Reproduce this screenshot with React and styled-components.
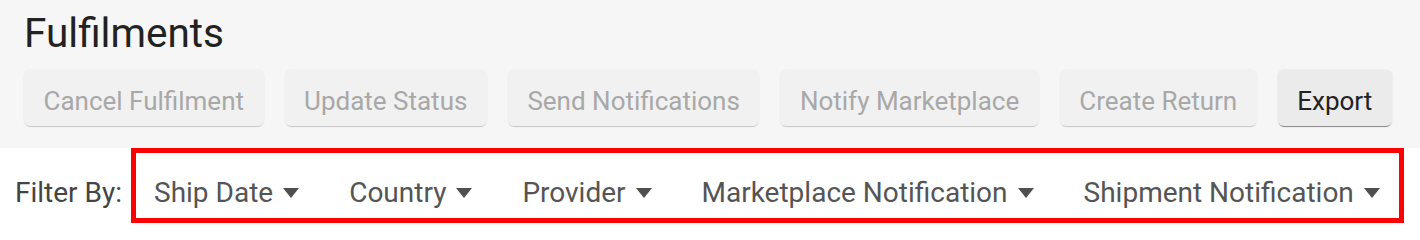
import React from "react";
import styled, { createGlobalStyle } from "styled-components";

const Global = createGlobalStyle`
  html, body { margin: 0; padding: 0; background: #ffffff; }
  body { font-family: Roboto, "Liberation Sans", sans-serif; }
  * { box-sizing: border-box; }
`;

const Header = styled.header`
  background: #f6f6f6;
  padding: 13px 24px 22px;
  display: flex;
  flex-direction: column;
  gap: 17px;
`;

const Title = styled.h1`
  margin: 0;
  font-size: 40.5px;
  line-height: 40px;
  font-weight: 400;
  color: #222222;
`;

const Toolbar = styled.div`
  display: flex;
  gap: 21px;
`;

const ActionButton = styled.button`
  flex-shrink: 0;
  white-space: nowrap;
  font-family: Roboto, "Liberation Sans", sans-serif;
  font-size: 26px;
  line-height: 26px;
  height: 56px;
  padding: 18px 19.5px 12px;
  border: none;
  border-radius: 6px;
  background: ${(p) => (p.disabled ? "#f1f1f1" : "#ebebeb")};
  color: ${(p) => (p.disabled ? "#a8a8a8" : "#222222")};
  box-shadow: ${(p) =>
    p.disabled
      ? "0 2px 1px -1px rgba(0,0,0,0.18), 0 0 0 1px rgba(0,0,0,0.02)"
      : "0 2px 1px -1px rgba(0,0,0,0.45), 0 0 0 1px rgba(0,0,0,0.03)"};
  cursor: ${(p) => (p.disabled ? "default" : "pointer")};
`;

const FilterRow = styled.div`
  display: flex;
  align-items: flex-start;
  height: 76px;
`;

const FilterLabel = styled.span`
  font-size: 28px;
  line-height: 28px;
  color: #444444;
  padding: 31px 9px 0 15px;
`;

const FilterBox = styled.div`
  width: 1273px;
  height: 75px;
  border: 5px solid #ff0000;
  display: flex;
  gap: 50px;
  padding: 26px 0 0 18px;
`;

const FilterItem = styled.span`
  display: inline-flex;
  align-items: center;
  gap: 10px;
  font-size: 28px;
  line-height: 28px;
  color: #555555;
  height: 28px;
  white-space: nowrap;
`;

const Caret = () => (
  <svg width="16" height="10" viewBox="0 0 16 10" aria-hidden="true">
    <path d="M0 0 H16 L8 10 Z" fill="#4f4f4f" />
  </svg>
);

const actions = [
  "Cancel Fulfilment",
  "Update Status",
  "Send Notifications",
  "Notify Marketplace",
  "Create Return",
];

const filters = [
  "Ship Date",
  "Country",
  "Provider",
  "Marketplace Notification",
  "Shipment Notification",
];

export default function App() {
  return (
    <>
      <Global />
      <Header>
        <Title>Fulfilments</Title>
        <Toolbar>
          {actions.map((a) => (
            <ActionButton key={a} disabled>
              {a}
            </ActionButton>
          ))}
          <ActionButton>Export</ActionButton>
        </Toolbar>
      </Header>
      <FilterRow>
        <FilterLabel>Filter By:</FilterLabel>
        <FilterBox>
          {filters.map((f) => (
            <FilterItem key={f}>
              {f}
              <Caret />
            </FilterItem>
          ))}
        </FilterBox>
      </FilterRow>
    </>
  );
}
